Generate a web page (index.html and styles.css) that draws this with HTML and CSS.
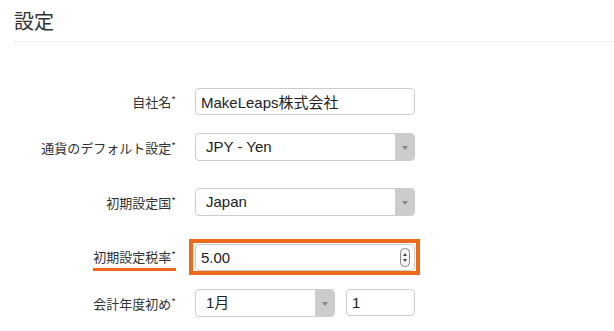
FILE: index.html
```html
<!DOCTYPE html>
<html lang="ja">
<head>
    <meta charset="UTF-8">
    <title>設定</title>
    <link rel="stylesheet" href="styles.css">
</head>
<body>
    <div class="page">
        <h1 class="title">設定</h1>

        <form class="settings">
            <div class="row">
                <label class="label">自社名<sup>*</sup></label>
                <input class="field" type="text" value="MakeLeaps株式会社">
            </div>

            <div class="row">
                <label class="label">通貨のデフォルト設定<sup>*</sup></label>
                <div class="select">
                    <span class="select-text">JPY - Yen</span>
                    <span class="select-arrow"></span>
                </div>
            </div>

            <div class="row wide">
                <label class="label">初期設定国<sup>*</sup></label>
                <div class="select">
                    <span class="select-text">Japan</span>
                    <span class="select-arrow"></span>
                </div>
            </div>

            <div class="row wide">
                <label class="label"><span class="marked">初期設定税率<sup>*</sup></span></label>
                <div class="spin-wrap">
                    <input class="field" type="text" value="5.00">
                    <svg class="spinner" width="10" height="19" viewBox="0 0 10 19">
                        <rect x="0.5" y="0.5" width="9" height="18" rx="4" fill="#f4f4f4" stroke="#888"/>
                        <path d="M3 8 L5 5 L7 8 Z" fill="#444"/>
                        <path d="M3 11 L5 14 L7 11 Z" fill="#444"/>
                    </svg>
                </div>
            </div>

            <div class="row">
                <label class="label">会計年度初め<sup>*</sup></label>
                <div class="pair">
                    <div class="select small">
                        <span class="select-text">1月</span>
                        <span class="select-arrow"></span>
                    </div>
                    <input class="field tiny" type="text" value="1">
                </div>
            </div>
        </form>
    </div>
</body>
</html>
```

FILE: styles.css
```css
body {
    margin: 0;
    background: #fff;
    color: #333;
    font-family: "Liberation Sans", "Noto Sans CJK JP", sans-serif;
}
.page {
    padding: 0 0 0 13px;
}
.title {
    margin: 0;
    padding: 8px 0 7px 1px;
    font-family: "Noto Sans CJK JP", sans-serif;
    font-size: 20px;
    font-weight: normal;
    line-height: 26px;
    color: #333;
    border-bottom: 1px solid #eee;
}
.settings {
    padding-top: 46px;
}
.row {
    display: flex;
    align-items: center;
    margin-bottom: 18px;
}
.row.wide {
    margin-top: 27px;
}
.label {
    width: 163px;
    margin-right: 19px;
    text-align: right;
    font-family: "Noto Sans CJK JP", sans-serif;
    font-size: 13px;
    color: #333;
}
.label sup {
    font-size: 10px;
    vertical-align: 3px;
    line-height: 0;
}
.marked {
    display: inline-block;
    padding: 0 0 2px 0;
    border-bottom: 3px solid #ec6b1b;
    line-height: 18px;
    margin-top: 5px;
}
.field {
    box-sizing: border-box;
    width: 220px;
    height: 27px;
    margin: 0;
    padding: 0 5px;
    border: 1px solid #ccc;
    border-radius: 4px;
    font-family: "Liberation Sans", "Noto Sans CJK JP", sans-serif;
    font-size: 15px;
    color: #222;
    background: #fff;
}
.field.tiny {
    width: 69px;
}
.spin-wrap {
    position: relative;
    display: flex;
}
.spin-wrap::before {
    content: "";
    position: absolute;
    left: -6px;
    right: -5px;
    top: -5px;
    bottom: -4px;
    border: 4px solid #ec6b1b;
    pointer-events: none;
}
.spinner {
    position: absolute;
    right: 5px;
    top: 4px;
}
.select {
    box-sizing: border-box;
    width: 220px;
    height: 28px;
    display: flex;
    border: 1px solid #ccc;
    border-radius: 4px;
    overflow: hidden;
    background: #fff;
}
.select.small {
    width: 140px;
}
.select-text {
    flex: 1;
    padding-left: 10px;
    font-size: 15px;
    line-height: 26px;
    color: #222;
}
.select-arrow {
    width: 19px;
    background: #ccc;
    position: relative;
}
.select-arrow::after {
    content: "";
    position: absolute;
    left: 7px;
    top: 12px;
    border-left: 3px solid transparent;
    border-right: 3px solid transparent;
    border-top: 4px solid #888;
}
.pair {
    display: flex;
    gap: 11px;
}
```
